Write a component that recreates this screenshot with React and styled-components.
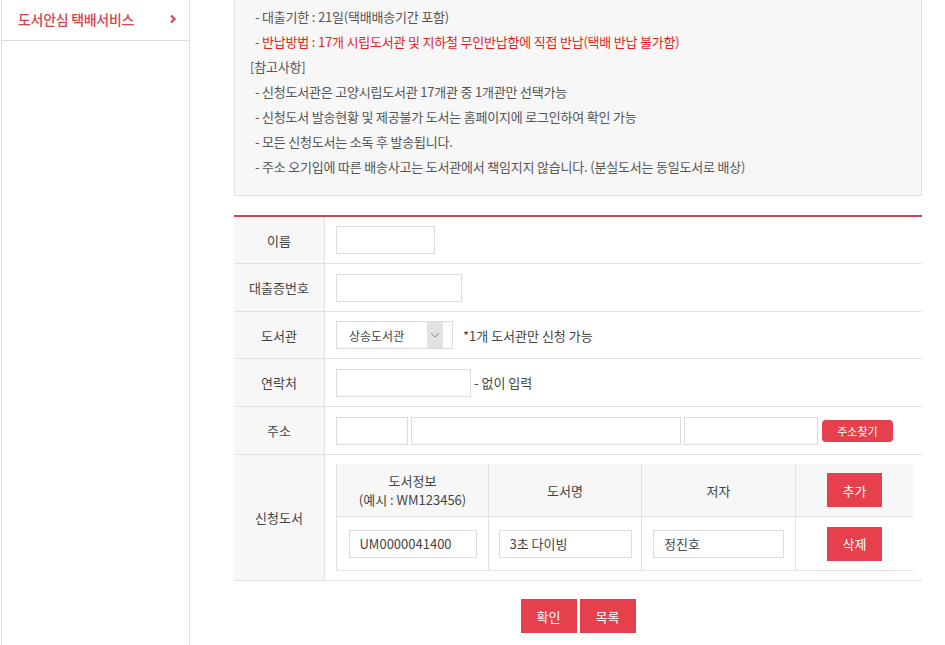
import React from "react";
import styled, { createGlobalStyle } from "styled-components";

const GlobalStyle = createGlobalStyle`
  html, body {
    margin: 0;
    padding: 0;
    background: #fff;
  }
  body {
    font-family: "Noto Sans CJK KR", "Noto Sans", sans-serif;
    font-size: 13px;
    color: #444;
  }
  * { box-sizing: border-box; }
`;

const RED = "#e5404b";
const LINE = "#e1e1e1";

const Page = styled.div`
  display: flex;
  min-height: 645px;
  overflow: hidden;
`;

const Sidebar = styled.aside`
  width: 189px;
  margin-left: 1px;
  border-left: 1px solid #dcdcdc;
  border-right: 1px solid #dcdcdc;
  flex-shrink: 0;
`;

const MenuItem = styled.a`
  display: flex;
  align-items: center;
  justify-content: space-between;
  height: 43px;
  margin-top: -2px;
  padding: 0 12px 0 16px;
  border-bottom: 1px solid #dcdcdc;
  color: #d9424c;
  font-size: 14px;
  font-weight: 500;
  letter-spacing: -0.3px;
  text-decoration: none;
`;

const Content = styled.main`
  width: 688px;
  margin-left: 44px;
`;

const InfoBox = styled.div`
  background: #f7f7f7;
  border: 1px solid #e0e0e0;
  border-top: none;
  padding: 4px 15px 16px;
  line-height: 25px;
  letter-spacing: -0.2px;
  color: #555;
`;

const InfoLine = styled.p`
  margin: 0;
  padding-left: ${(p) => (p.$sub ? "5px" : "0")};
  color: ${(p) => (p.$red ? "#e21f26" : "#555")};
`;

const FormTable = styled.div`
  margin-top: 19px;
  border-top: 2px solid #c94a50;
`;

const Row = styled.div`
  display: flex;
  border-bottom: 1px solid ${LINE};
  min-height: ${(p) => p.$h || 48}px;
`;

const Label = styled.div`
  width: 91px;
  flex-shrink: 0;
  background: #f7f7f7;
  border-right: 1px solid ${LINE};
  display: flex;
  align-items: center;
  justify-content: center;
  color: #444;
`;

const Value = styled.div`
  flex: 1;
  display: flex;
  align-items: center;
  gap: 3px;
  padding: 0 10px 0 11px;
`;

const Input = styled.input`
  width: ${(p) => p.$w}px;
  height: 28px;
  border: 1px solid #dcdcdc;
  background: #fff;
  padding: 0 10px;
  font: inherit;
  color: #444;
  outline: none;
`;

const Hint = styled.span`
  margin-left: ${(p) => (p.$tight ? "0" : "7px")};
  color: #444;
`;

const Select = styled.div`
  width: 117px;
  height: 28px;
  border: 1px solid #dcdcdc;
  display: flex;
  align-items: stretch;
  padding-left: 12px;
  padding-right: 9px;
`;

const SelectText = styled.span`
  flex: 1;
  display: flex;
  align-items: center;
  font-size: 12px;
`;

const SelectArrow = styled.span`
  width: 16px;
  background: #e2e2e2;
  display: flex;
  align-items: center;
  justify-content: center;
`;

const SmallButton = styled.button`
  width: 71px;
  height: 22px;
  margin-left: 1px;
  border: none;
  border-radius: 4px;
  background: ${RED};
  color: #fff;
  font: inherit;
  font-size: 11px;
`;

const BookWrap = styled.div`
  flex: 1;
  padding: 9px 10px 9px 11px;
`;

const BookGrid = styled.div`
  display: grid;
  grid-template-columns: 152px 153px 154px 117px;
  grid-template-rows: 53px 53px;
  border-left: 1px solid ${LINE};
  border-bottom: 1px solid ${LINE};
`;

const HeadCell = styled.div`
  background: #f7f7f7;
  border-right: ${(p) => (p.$last ? "none" : `1px solid ${LINE}`)};
  border-bottom: 1px solid ${LINE};
  display: flex;
  flex-direction: column;
  align-items: center;
  justify-content: center;
  text-align: center;
  line-height: 19px;
  color: #444;
`;

const BodyCell = styled.div`
  border-right: ${(p) => (p.$last ? "none" : `1px solid ${LINE}`)};
  display: flex;
  align-items: center;
  justify-content: center;
`;

const RedButton = styled.button`
  width: ${(p) => p.$w || 55}px;
  height: ${(p) => p.$h || 34}px;
  border: none;
  background: ${RED};
  color: #fff;
  font: inherit;
  font-size: 13px;
  padding: 0;
`;

const Actions = styled.div`
  display: flex;
  justify-content: center;
  gap: 3px;
  margin-top: 18px;
`;

const Chevron = () => (
  <svg width="8" height="10" viewBox="0 0 8 10">
    <path d="M2 1.5 L5.5 5 L2 8.5" fill="none" stroke="#d9424c" strokeWidth="2.2" />
  </svg>
);

const DownArrow = () => (
  <svg width="10" height="6" viewBox="0 0 10 6">
    <path d="M1 1 L5 5 L9 1" fill="none" stroke="#888" strokeWidth="1" />
  </svg>
);

export default function App() {
  return (
    <Page>
      <GlobalStyle />
      <Sidebar>
        <MenuItem href="#">
          도서안심 택배서비스
          <Chevron />
        </MenuItem>
      </Sidebar>
      <Content>
        <InfoBox>
          <InfoLine $sub>- 대출기한 : 21일(택배배송기간 포함)</InfoLine>
          <InfoLine $sub $red>
            - 반납방법 : 17개 시립도서관 및 지하철 무인반납함에 직접 반납(택배 반납 불가함)
          </InfoLine>
          <InfoLine>[참고사항]</InfoLine>
          <InfoLine $sub>- 신청도서관은 고양시립도서관 17개관 중 1개관만 선택가능</InfoLine>
          <InfoLine $sub>- 신청도서 발송현황 및 제공불가 도서는 홈페이지에 로그인하여 확인 가능</InfoLine>
          <InfoLine $sub>- 모든 신청도서는 소독 후 발송됩니다.</InfoLine>
          <InfoLine $sub>
            - 주소 오기입에 따른 배송사고는 도서관에서 책임지지 않습니다. (분실도서는 동일도서로 배상)
          </InfoLine>
        </InfoBox>

        <FormTable>
          <Row $h={47}>
            <Label>이름</Label>
            <Value>
              <Input $w={99} />
            </Value>
          </Row>
          <Row $h={48}>
            <Label>대출증번호</Label>
            <Value>
              <Input $w={126} />
            </Value>
          </Row>
          <Row $h={47}>
            <Label>도서관</Label>
            <Value>
              <Select>
                <SelectText>상송도서관</SelectText>
                <SelectArrow>
                  <DownArrow />
                </SelectArrow>
              </Select>
              <Hint>*1개 도서관만 신청 가능</Hint>
            </Value>
          </Row>
          <Row $h={48}>
            <Label>연락처</Label>
            <Value>
              <Input $w={135} />
              <Hint $tight>- 없이 입력</Hint>
            </Value>
          </Row>
          <Row $h={48}>
            <Label>주소</Label>
            <Value>
              <Input $w={72} />
              <Input $w={270} />
              <Input $w={134} />
              <SmallButton>주소찾기</SmallButton>
            </Value>
          </Row>
          <Row $h={125}>
            <Label>신청도서</Label>
            <BookWrap>
              <BookGrid>
                <HeadCell>
                  <span>도서정보</span>
                  <span>(예시 : WM123456)</span>
                </HeadCell>
                <HeadCell>도서명</HeadCell>
                <HeadCell>저자</HeadCell>
                <HeadCell $last>
                  <RedButton>추가</RedButton>
                </HeadCell>
                <BodyCell>
                  <Input $w={128} defaultValue="UM0000041400" />
                </BodyCell>
                <BodyCell>
                  <Input $w={133} defaultValue="3초 다이빙" />
                </BodyCell>
                <BodyCell>
                  <Input $w={131} defaultValue="정진호" />
                </BodyCell>
                <BodyCell $last>
                  <RedButton>삭제</RedButton>
                </BodyCell>
              </BookGrid>
            </BookWrap>
          </Row>
        </FormTable>

        <Actions>
          <RedButton $w={56}>확인</RedButton>
          <RedButton $w={56}>목록</RedButton>
        </Actions>
      </Content>
    </Page>
  );
}
